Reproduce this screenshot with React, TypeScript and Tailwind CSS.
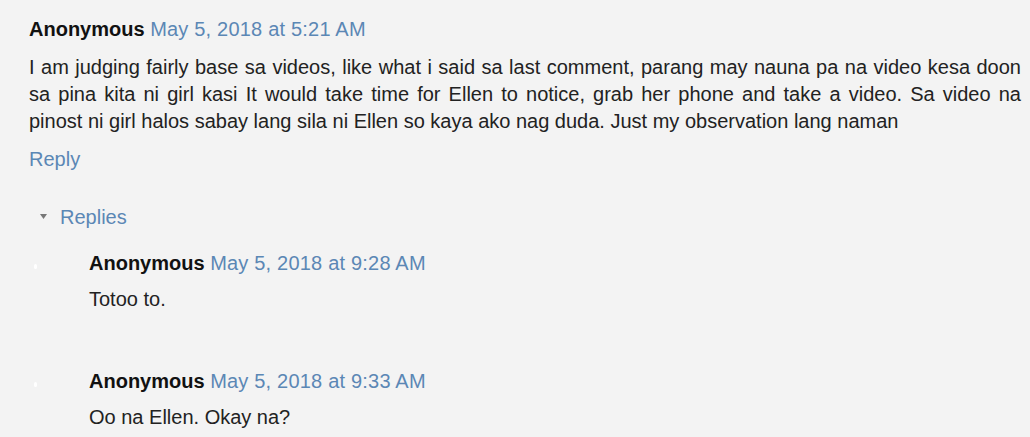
import React from "react";

const link = "text-[#5b87b5]";

function Reply({ date, text }: { date: string; text: string }) {
  return (
    <div className="relative pl-[89px]">
      <span className="absolute left-[34px] top-[14px] w-[3px] h-[5px] bg-white rounded-full" />
      <div className="leading-[27px]">
        <span className="font-bold text-[#111]">Anonymous</span>{" "}
        <span className={`${link} tracking-[0.2px]`}>{date}</span>
      </div>
      <div className="mt-[9px] leading-[27px] text-[#222]">{text}</div>
    </div>
  );
}

export default function App() {
  return (
    <div
      className="w-[1030px] h-[437px] overflow-hidden bg-[#f3f3f3] text-[20px]"
      style={{ fontFamily: '"Liberation Sans", Arial, sans-serif' }}
    >
      <div className="pl-[29px] pr-[9px] pt-[16px]">
        <div className="leading-[27px]">
          <span className="font-bold text-[#111]">Anonymous</span>{" "}
          <span className={`${link} tracking-[0.2px]`}>May 5, 2018 at 5:21 AM</span>
        </div>
        <div className="mt-[11px] leading-[27px] text-[#222]">
          <div className="whitespace-nowrap text-justify [text-align-last:justify]">
            I am judging fairly base sa videos, like what i said sa last comment, parang may nauna pa na video kesa doon
          </div>
          <div className="whitespace-nowrap text-justify [text-align-last:justify]">
            sa pina kita ni girl kasi It would take time for Ellen to notice, grab her phone and take a video. Sa video na
          </div>
          <div className="whitespace-nowrap">
            pinost ni girl halos sabay lang sila ni Ellen so kaya ako nag duda. Just my observation lang naman
          </div>
        </div>
        <div className={`mt-[11px] leading-[27px] ${link}`}>Reply</div>
      </div>
      <div className="mt-[31px] pl-[40px] flex items-center gap-[13px] leading-[27px]">
        <svg width="7" height="5" viewBox="0 0 7 5" className="mt-[-3px]">
          <path d="M0 0 L7 0 L3.5 5 Z" fill="#777" />
        </svg>
        <span className={link}>Replies</span>
      </div>
      <div className="mt-[19px]">
        <Reply date="May 5, 2018 at 9:28 AM" text="Totoo to." />
      </div>
      <div className="mt-[55px]">
        <Reply date="May 5, 2018 at 9:33 AM" text="Oo na Ellen. Okay na?" />
      </div>
    </div>
  );
}
